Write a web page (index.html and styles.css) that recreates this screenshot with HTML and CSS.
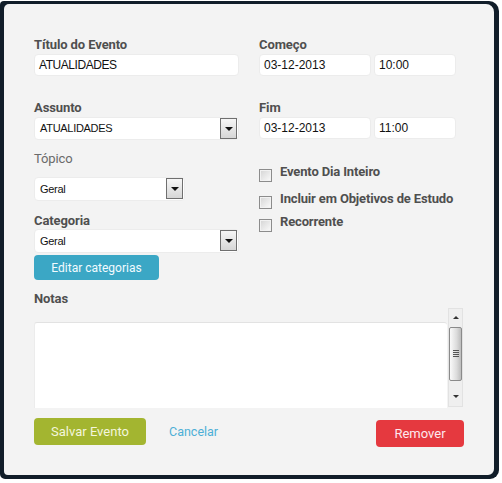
FILE: index.html
```html
<!DOCTYPE html>
<html lang="pt">
<head>
<meta charset="utf-8">
<title>Evento</title>
<link rel="stylesheet" href="styles.css">
</head>
<body>
<div class="frame">
  <div class="panel">
    <div class="cols">
      <div class="col col-left">
        <div class="lbl">Título do Evento</div>
        <div class="field field-title">ATUALIDADES</div>

        <div class="lbl lbl-assunto">Assunto</div>
        <div class="select select-wide">ATUALIDADES<span class="arrow"></span></div>

        <div class="lbl lbl-light lbl-topico">Tópico</div>
        <div class="select select-topico">Geral<span class="arrow"></span></div>

        <div class="lbl lbl-categoria">Categoria</div>
        <div class="select select-wide">Geral<span class="arrow"></span></div>

        <div class="btn btn-blue">Editar categorias</div>
      </div>

      <div class="col col-right">
        <div class="lbl">Começo</div>
        <div class="pair">
          <div class="field field-date">03-12-2013</div>
          <div class="field field-time">10:00</div>
        </div>

        <div class="lbl lbl-fim">Fim</div>
        <div class="pair pair-fim">
          <div class="field field-date">03-12-2013</div>
          <div class="field field-time">11:00</div>
        </div>

        <div class="check check-1"><span class="box"></span><span class="check-text">Evento Dia Inteiro</span></div>
        <div class="check check-2"><span class="box"></span><span class="check-text">Incluir em Objetivos de Estudo</span></div>
        <div class="check check-3"><span class="box"></span><span class="check-text">Recorrente</span></div>
      </div>
    </div>

    <div class="lbl lbl-notas">Notas</div>
    <div class="notes">
      <div class="textarea"></div>
      <div class="scrollbar">
        <span class="sb-up"></span>
        <span class="sb-thumb"><span class="grip"></span></span>
        <span class="sb-down"></span>
      </div>
    </div>

    <div class="actions">
      <div class="btn btn-green">Salvar Evento</div>
      <span class="link">Cancelar</span>
      <div class="btn btn-red">Remover</div>
    </div>
  </div>
</div>
</body>
</html>
```

FILE: styles.css
```css
* { box-sizing: border-box; }

html, body {
  margin: 0;
  padding: 0;
  background: #ffffff;
}

body {
  width: 502px;
  height: 483px;
  overflow: hidden;
  font-family: Roboto, "Liberation Sans", Arial, sans-serif;
}

.frame {
  margin-top: 1px;
  width: 499px;
  height: 478px;
  background: #111d29;
  border-radius: 4px 10px 9px 5px;
  padding: 3px 5px 4px 4px;
}

.panel {
  width: 490px;
  height: 471px;
  background: #f3f3f3;
  border-radius: 5px 8px 6px 4px;
  padding: 33px 30px 0 30px;
}

.cols {
  display: flex;
  gap: 20px;
}

.col {
  display: flex;
  flex-direction: column;
  align-items: flex-start;
}

.col-left { width: 205px; }
.col-right { width: 205px; }

.lbl {
  font-size: 13px;
  line-height: 16px;
  height: 16px;
  font-weight: 700;
  color: #4f4f4f;
  letter-spacing: -0.1px;
}

.lbl-light {
  font-weight: 400;
  color: #6a6a6a;
}

.lbl-assunto { margin-top: 24px; }
.lbl-topico { margin-top: 11px; }
.lbl-categoria { margin-top: 12px; }
.lbl-fim { margin-top: 24px; }
.lbl-notas { margin-top: 11px; }

.field {
  margin-top: 1px;
  height: 22px;
  background: #ffffff;
  border: 1px solid #ececec;
  border-radius: 4px;
  font-family: "Liberation Sans", Arial, sans-serif;
  font-size: 12px;
  line-height: 20px;
  color: #111111;
  padding-left: 4px;
}

.field-title {
  width: 205px;
  letter-spacing: -0.45px;
}

.pair {
  display: flex;
  gap: 3px;
}

.field-date { width: 112px; }
.field-time { width: 82px; }

.select {
  position: relative;
  margin-top: 1px;
  height: 23px;
  background: #ffffff;
  border: 1px solid #ececec;
  border-radius: 4px;
  font-family: "Liberation Sans", Arial, sans-serif;
  font-size: 11px;
  line-height: 21px;
  letter-spacing: -0.3px;
  color: #111111;
  padding-left: 5px;
}

.select-wide { width: 205px; }
.select-topico {
  width: 151px;
  margin-top: 10px;
  height: 24px;
  line-height: 22px;
}
.lbl-categoria + .select { margin-top: 0; height: 24px; line-height: 22px; }

.arrow {
  position: absolute;
  right: 1px;
  top: 0px;
  width: 17px;
  height: 21px;
  border: 1px solid #6f6f6f;
  background: linear-gradient(#f6f6f6, #d6d6d6);
}

.arrow::after {
  content: "";
  position: absolute;
  left: 4px;
  top: 8px;
  border-left: 4px solid transparent;
  border-right: 4px solid transparent;
  border-top: 4px solid #111111;
}

.btn {
  display: flex;
  align-items: center;
  justify-content: center;
  border-radius: 4px;
  color: #ffffff;
  font-size: 12px;
}

.btn-blue {
  margin-top: 2px;
  width: 125px;
  height: 25px;
  background: #3ba7c5;
  color: #f2fbff;
}

.check {
  display: flex;
  align-items: flex-start;
  font-size: 13px;
  line-height: 16px;
  font-weight: 700;
  color: #4f4f4f;
  letter-spacing: -0.15px;
}

.check-1 { margin-top: 25px; }
.check-2 { margin-top: 9px; }
.check-3 { margin-top: 5px; }

.box {
  width: 13px;
  height: 13px;
  margin-top: 5px;
  border: 1px solid #8c8c8c;
  background: linear-gradient(135deg, #d4d4d4, #fbfbfb);
  box-shadow: inset 0 0 0 1px #f2f2f2;
  flex: none;
}

.check-text { margin-left: 8px; }

.notes {
  display: flex;
  align-items: flex-start;
  margin-top: 1px;
}

.textarea {
  width: 413px;
  height: 86px;
  margin-top: 14px;
  background: #ffffff;
  border-top: 1px solid #e2e2e2;
  border-left: 1px solid #ececec;
  border-radius: 3px 3px 0 0;
}

.scrollbar {
  position: relative;
  width: 15px;
  height: 99px;
  margin-left: 1px;
  background: #efefef;
  border: 1px solid #e2e2e2;
}

.sb-up, .sb-down {
  position: absolute;
  left: 4px;
  border-left: 3px solid transparent;
  border-right: 3px solid transparent;
}

.sb-up {
  top: 7px;
  border-bottom: 3px solid #333333;
}

.sb-down {
  bottom: 8px;
  border-top: 3px solid #333333;
}

.sb-thumb {
  position: absolute;
  left: 0;
  top: 18px;
  width: 13px;
  height: 54px;
  border: 1px solid #8a8a8a;
  border-radius: 2px;
  background: linear-gradient(90deg, #fafafa, #dcdcdc 60%, #bdbdbd);
}

.grip {
  position: absolute;
  left: 3px;
  top: 22px;
  width: 6px;
  height: 7px;
  background: repeating-linear-gradient(#555 0 1px, transparent 1px 2px);
}

.actions {
  display: flex;
  align-items: flex-start;
  margin-top: 10px;
}

.btn-green {
  width: 112px;
  height: 27px;
  background: #a3b530;
  font-size: 13px;
  color: #f3f6dc;
}

.link {
  margin-left: 23px;
  margin-top: 6px;
  font-size: 12.5px;
  line-height: 16px;
  color: #4cafd6;
}

.btn-red {
  margin-left: auto;
  margin-top: 2px;
  width: 88px;
  height: 27px;
  background: #e5393f;
  font-size: 13px;
  color: #fde8ee;
}
```
